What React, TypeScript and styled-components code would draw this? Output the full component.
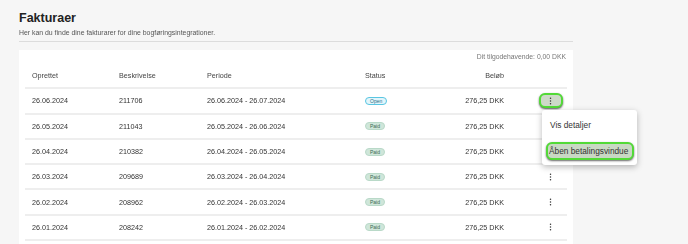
import React from 'react';
import styled, { createGlobalStyle } from 'styled-components';

const GlobalStyle = createGlobalStyle`
    body {
        margin: 0;
        background: #f6f6f6;
        font-family: "Liberation Sans", Arial, sans-serif;
        color: #333;
    }
`;

const Page = styled.div`
    padding: 11px 0 0 19px;
    width: 554px;
`;

const Title = styled.h1`
    margin: 0;
    font-size: 12.5px;
    line-height: 15px;
    font-weight: bold;
    color: #222;
`;

const Subtitle = styled.p`
    margin: 2px 0 0;
    font-size: 6.9px;
    line-height: 9px;
    color: #555;
    filter: grayscale(1);
`;

const Divider = styled.hr`
    margin: 4px 0 0;
    border: none;
    border-top: 1px solid #dcdcdc;
`;

const Card = styled.div`
    margin-top: 8px;
    background: #fff;
    padding: 0 6px 20px;
`;

const Balance = styled.div`
    height: 13px;
    line-height: 13px;
    font-size: 6.8px;
    color: #777;
    text-align: right;
    padding-right: 1px;
    filter: grayscale(1);
`;

const Row = styled.div<{ $head?: boolean }>`
    display: grid;
    grid-template-columns: 87px 88px 158px 73px 80px 1fr;
    align-items: center;
    height: ${({ $head }) => ($head ? '24.3px' : '23.3px')};
    border-bottom: 2px solid #eeeeee;
`;

const Cell = styled.div<{ $right?: boolean; $head?: boolean }>`
    padding: ${({ $right }) => ($right ? '0 7px 0 0' : '0 0 0 7px')};
    text-align: ${({ $right }) => ($right ? 'right' : 'left')};
    white-space: nowrap;
    font-size: 7.2px;
    color: ${({ $head }) => ($head ? '#444444' : '#333333')};
    filter: grayscale(1);
`;

const StatusCell = styled.div`
    padding-left: 7px;
    display: flex;
    align-items: center;
`;

const Badge = styled.span<{ $open?: boolean }>`
    display: inline-block;
    font-size: 5px;
    line-height: 6px;
    padding: 0 4px;
    border-radius: 5px;
    border: 1px solid ${({ $open }) => ($open ? '#5ac6e2' : '#b9d9c8')};
    background: ${({ $open }) => ($open ? '#e2f5fb' : '#cfe6da')};
    color: ${({ $open }) => ($open ? '#2b6f86' : '#3d6b52')};
`;

const ActionCell = styled.div`
    position: relative;
    padding-left: 27.5px;
`;

const KebabButton = styled.button<{ $active?: boolean }>`
    width: 24px;
    height: 15px;
    padding: 0;
    display: flex;
    align-items: center;
    justify-content: center;
    border-radius: 6px;
    border: 2px solid ${({ $active }) => ($active ? '#52da37' : 'transparent')};
    background: ${({ $active }) => ($active ? '#cdd9c8' : 'transparent')};
    box-shadow: ${({ $active }) => ($active ? '0 1px 2px rgba(0,0,0,0.65)' : 'none')};
`;

const Menu = styled.div`
    position: absolute;
    top: 17px;
    left: 31px;
    width: 95px;
    background: #fff;
    border-radius: 3px;
    box-shadow: 0 2px 6px rgba(0, 0, 0, 0.28);
    padding: 2px 0 5px;
    z-index: 2;
`;

const MenuItem = styled.div<{ $focused?: boolean }>`
    font-size: 8.3px;
    color: #333;
    white-space: nowrap;
    ${({ $focused }) =>
        $focused
            ? `
        margin: 4px 3px 0 4px;
        height: 14px;
        line-height: 14px;
        padding-left: 1px;
        border: 2px solid #52da37;
        border-radius: 6px;
        background: #c9d8c4;
        box-shadow: 0 1px 2px rgba(0,0,0,0.6);
    `
            : `
        height: 26px;
        line-height: 26px;
        padding-left: 8px;
    `}
`;

const Kebab = () => (
    <svg width="3" height="8" viewBox="0 0 3 8">
        <circle cx="1.5" cy="1.2" r="0.75" fill="#333" />
        <circle cx="1.5" cy="4" r="0.75" fill="#333" />
        <circle cx="1.5" cy="6.8" r="0.75" fill="#333" />
    </svg>
);

const invoices = [
    { created: '26.06.2024', desc: '211706', period: '26.06.2024 - 26.07.2024', status: 'Open' },
    { created: '26.05.2024', desc: '211043', period: '26.05.2024 - 26.06.2024', status: 'Paid' },
    { created: '26.04.2024', desc: '210382', period: '26.04.2024 - 26.05.2024', status: 'Paid' },
    { created: '26.03.2024', desc: '209689', period: '26.03.2024 - 26.04.2024', status: 'Paid' },
    { created: '26.02.2024', desc: '208962', period: '26.02.2024 - 26.03.2024', status: 'Paid' },
    { created: '26.01.2024', desc: '208242', period: '26.01.2024 - 26.02.2024', status: 'Paid' },
];

const App = () => {
    return (
        <Page>
            <GlobalStyle />
            <Title>Fakturaer</Title>
            <Subtitle>Her kan du finde dine fakturarer for dine bogføringsintegrationer.</Subtitle>
            <Divider />
            <Card>
                <Balance>Dit tilgodehavende: 0,00 DKK</Balance>
                <Row $head>
                    <Cell $head>Oprettet</Cell>
                    <Cell $head>Beskrivelse</Cell>
                    <Cell $head>Periode</Cell>
                    <Cell $head>Status</Cell>
                    <Cell $head $right>Beløb</Cell>
                    <Cell $head />
                </Row>
                {invoices.map((inv, i) => (
                    <Row key={inv.desc}>
                        <Cell>{inv.created}</Cell>
                        <Cell>{inv.desc}</Cell>
                        <Cell>{inv.period}</Cell>
                        <StatusCell>
                            <Badge $open={inv.status === 'Open'}>{inv.status}</Badge>
                        </StatusCell>
                        <Cell $right>276,25 DKK</Cell>
                        <ActionCell>
                            <KebabButton $active={i === 0}>
                                <Kebab />
                            </KebabButton>
                            {i === 0 && (
                                <Menu>
                                    <MenuItem>Vis detaljer</MenuItem>
                                    <MenuItem $focused>Åben betalingsvindue</MenuItem>
                                </Menu>
                            )}
                        </ActionCell>
                    </Row>
                ))}
            </Card>
        </Page>
    );
};

export default App;
